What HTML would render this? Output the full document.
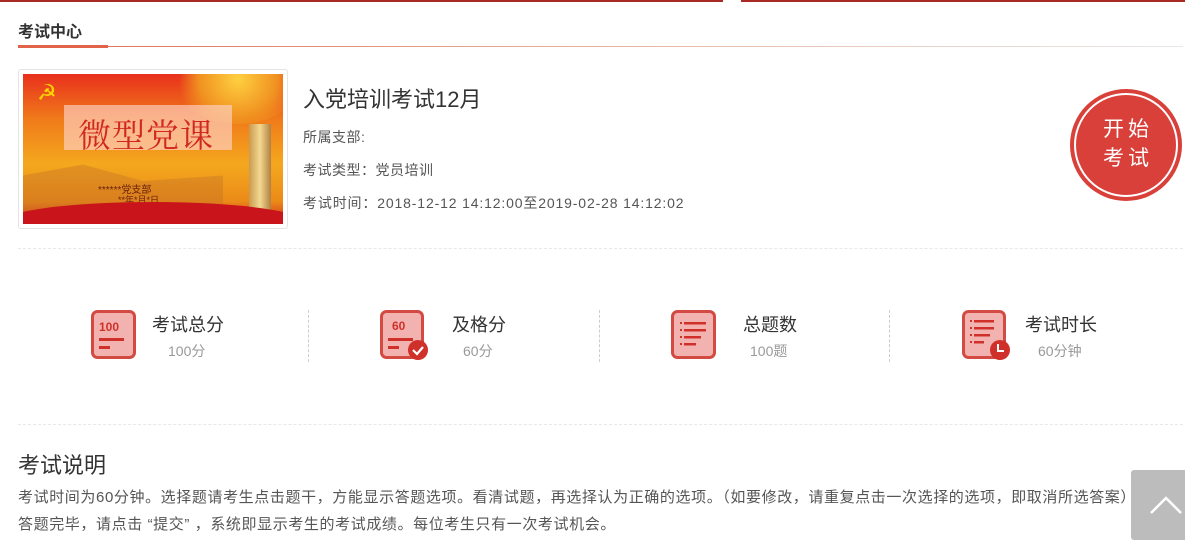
<!DOCTYPE html>
<html><head><meta charset="utf-8"><style>
*{margin:0;padding:0;box-sizing:border-box}
body{width:1185px;height:543px;overflow:hidden;background:#fff;font-family:"Liberation Sans","Noto Sans CJK SC",sans-serif;color:#333;position:relative}
.a{position:absolute}
.stat-t{font-size:18px;color:#333;white-space:nowrap}
.stat-s{font-size:14px;color:#999;white-space:nowrap}
.vd{width:0;border-left:1px dashed #ccc;height:52px;top:310px}
</style></head><body>
<div class="a" style="left:0;top:0;width:723px;height:2px;background:#a82a22"></div>
<div class="a" style="left:741px;top:0;width:444px;height:2px;background:#a82a22"></div>
<div class="a" style="left:18px;top:18px;font-size:16px;font-weight:bold;color:#333">考试中心</div>
<div class="a" style="left:18px;top:46px;width:1165px;height:1px;background:linear-gradient(90deg,#e06a50,#e8c0b0 60%,#e8e8e8)"></div>
<div class="a" style="left:18px;top:45px;width:90px;height:3px;background:#e0634a"></div>

<div class="a" style="left:18px;top:69px;width:270px;height:160px;border:1px solid #e4e4e4;border-radius:3px"></div>
<div class="a" style="left:23px;top:74px;width:260px;height:150px;overflow:hidden;background:linear-gradient(180deg,#e8301c 0%,#f07a1a 30%,#f4a81e 60%,#eb8a18 85%,#d0241c 100%)">
  <div class="a" style="left:150px;top:-40px;width:130px;height:90px;border-radius:50%;background:radial-gradient(circle,#ffd040 0%,#f09020 50%,rgba(240,80,20,0) 75%)"></div>
  <div class="a" style="left:14px;top:6px;font-size:22px;color:#ffd400">☭</div>
  <div class="a" style="left:41px;top:31px;width:168px;height:45px;background:rgba(255,210,200,.65)"></div>
  <div class="a" style="left:55px;top:36px;font-family:'Noto Serif CJK SC',serif;font-size:33px;color:#d02820;letter-spacing:1px">微型党课</div>
  <div class="a" style="left:0;top:85px;width:200px;height:55px;background:rgba(190,110,40,.35);clip-path:polygon(0 30%,30% 10%,60% 40%,100% 30%,100% 100%,0 100%)"></div>
  <div class="a" style="left:226px;top:50px;width:22px;height:100px;background:linear-gradient(90deg,#c89a50,#f4d890,#b08040)"></div>
  <div class="a" style="left:75px;top:107px;font-size:10px;color:#6a2010">******党支部</div>
  <div class="a" style="left:95px;top:119px;font-size:9px;color:#6a2010">**年*月*日</div>
  <div class="a" style="left:-20px;top:128px;width:300px;height:40px;background:#c8141a;border-radius:50% 50% 0 0"></div>
</div>

<div class="a" style="left:303px;top:82px;font-size:22px;color:#333">入党培训考试12月</div>
<div class="a" style="left:303px;top:127px;font-size:14px;color:#555;letter-spacing:.5px">所属支部:</div>
<div class="a" style="left:303px;top:160px;font-size:14px;color:#555;letter-spacing:.5px">考试类型：党员培训</div>
<div class="a" style="left:303px;top:193px;font-size:14px;color:#555;letter-spacing:.85px">考试时间：2018-12-12 14:12:00至2019-02-28 14:12:02</div>

<div class="a" style="left:1070px;top:89px;width:112px;height:112px;border-radius:50%;background:#d9403a;"></div>
<div class="a" style="left:1074px;top:93px;width:104px;height:104px;border-radius:50%;border:2px solid #fff;"></div>
<div class="a" style="left:1070px;top:115px;width:112px;text-align:center;color:#fff;font-size:21px;line-height:29px;letter-spacing:4px;padding-left:4px">开始<br>考试</div>

<div class="a" style="left:18px;top:248px;width:1165px;border-top:1px dashed #e8e8e8"></div>

<svg class="a" style="left:91px;top:310px" width="46" height="50" viewBox="0 0 46 50"><rect x="1.5" y="1.5" width="42" height="46" rx="5" fill="#f2b3b0" stroke="#d24a42" stroke-width="3"/><text x="8" y="21" font-size="12" font-weight="bold" fill="#d0302a" font-family="Liberation Sans">100</text><rect x="8" y="28" width="25" height="3" fill="#d0302a"/><rect x="8" y="36" width="11" height="3" fill="#d0302a"/></svg>
<div class="a stat-t" style="left:152px;top:311px">考试总分</div>
<div class="a stat-s" style="left:168px;top:341px">100分</div>
<div class="a vd" style="left:308px"></div>

<svg class="a" style="left:380px;top:310px" width="50" height="50" viewBox="0 0 50 50"><rect x="1.5" y="1.5" width="41" height="46" rx="5" fill="#f2b3b0" stroke="#d24a42" stroke-width="3"/><text x="12" y="20" font-size="12" font-weight="bold" fill="#d0302a" font-family="Liberation Sans">60</text><rect x="8" y="28" width="25" height="3" fill="#d0302a"/><rect x="8" y="36" width="11" height="3" fill="#d0302a"/><circle cx="38" cy="40" r="10" fill="#d0302a"/><path d="M33 40l4 4 6-7" stroke="#fff" stroke-width="2.2" fill="none"/></svg>
<div class="a stat-t" style="left:452px;top:311px">及格分</div>
<div class="a stat-s" style="left:463px;top:341px">60分</div>
<div class="a vd" style="left:599px"></div>

<svg class="a" style="left:671px;top:310px" width="46" height="50" viewBox="0 0 46 50"><rect x="1.5" y="1.5" width="42" height="46" rx="5" fill="#f2b3b0" stroke="#d24a42" stroke-width="3"/><g fill="#d0302a"><rect x="9" y="12" width="2" height="2"/><rect x="13" y="12" width="22" height="2.5"/><rect x="9" y="19" width="2" height="2"/><rect x="13" y="19" width="22" height="2.5"/><rect x="9" y="26" width="2" height="2"/><rect x="13" y="26" width="17" height="2.5"/><rect x="9" y="33" width="2" height="2"/><rect x="13" y="33" width="12" height="2.5"/></g></svg>
<div class="a stat-t" style="left:743px;top:311px">总题数</div>
<div class="a stat-s" style="left:750px;top:341px">100题</div>
<div class="a vd" style="left:889px"></div>

<svg class="a" style="left:962px;top:310px" width="50" height="50" viewBox="0 0 50 50"><rect x="1.5" y="1.5" width="41" height="46" rx="5" fill="#f2b3b0" stroke="#d24a42" stroke-width="3"/><g fill="#d0302a"><rect x="8" y="10" width="2" height="2"/><rect x="12" y="10" width="20" height="2.5"/><rect x="8" y="17" width="2" height="2"/><rect x="12" y="17" width="20" height="2.5"/><rect x="8" y="24" width="2" height="2"/><rect x="12" y="24" width="16" height="2.5"/><rect x="8" y="31" width="2" height="2"/><rect x="12" y="31" width="10" height="2.5"/></g><circle cx="38" cy="40" r="10" fill="#d0302a"/><path d="M36 34v7h6" stroke="#fff" stroke-width="2" fill="none"/></svg>
<div class="a stat-t" style="left:1025px;top:311px">考试时长</div>
<div class="a stat-s" style="left:1038px;top:341px">60分钟</div>

<div class="a" style="left:18px;top:424px;width:1165px;border-top:1px dashed #e8e8e8"></div>
<div class="a" style="left:18px;top:448px;font-size:22px;color:#333">考试说明</div>
<div class="a" style="left:18px;top:486px;font-size:15px;color:#555;white-space:nowrap;letter-spacing:.6px">考试时间为60分钟。选择题请考生点击题干，方能显示答题选项。看清试题，再选择认为正确的选项。（如要修改，请重复点击一次选择的选项，即取消所选答案）</div>
<div class="a" style="left:18px;top:513px;font-size:15px;color:#555;white-space:nowrap;letter-spacing:.6px">答题完毕，请点击 “提交” ，系统即显示考生的考试成绩。每位考生只有一次考试机会。</div>

<div class="a" style="left:1131px;top:470px;width:60px;height:70px;background:#bcbcbc;border-radius:3px"></div>
<svg class="a" style="left:1148px;top:494px" width="36" height="22"><path d="M3 19L18 4l15 15" stroke="#fff" stroke-width="2.5" fill="none"/></svg>
</body></html>
